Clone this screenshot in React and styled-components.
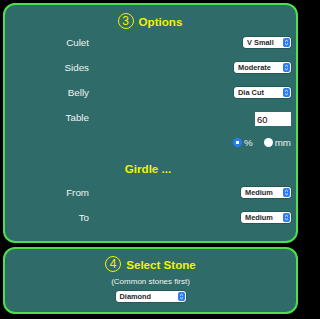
import React from "react";
import styled, { createGlobalStyle } from "styled-components";

const Global = createGlobalStyle`
  html, body { margin: 0; padding: 0; background: #000; }
  body { font-family: "Liberation Sans", Arial, sans-serif; }
`;

const Page = styled.div`
  width: 300px;
  height: 319px;
  box-sizing: border-box;
  padding: 3px 2px 0 3px;
  display: flex;
  flex-direction: column;
  gap: 4px;
  background: #000;
`;

const Panel = styled.section`
  box-sizing: border-box;
  height: ${(p) => p.$h}px;
  background: #2f6b68;
  border: 2px solid #4ee04b;
  border-radius: 12px;
  padding: ${(p) => p.$pad};
  display: flex;
  flex-direction: column;
`;

const Title = styled.h2`
  margin: 0;
  height: 18px;
  display: flex;
  align-items: center;
  justify-content: center;
  gap: 5px;
  color: #f4f200;
  font-size: 11.6px;
  font-weight: bold;
  padding-left: ${(p) => p.$shift || 0}px;
`;

const Circle = styled.span`
  box-sizing: border-box;
  width: 16px;
  height: 16px;
  border: 1.3px solid #f4f200;
  border-radius: 50%;
  display: inline-flex;
  align-items: center;
  justify-content: center;
  font-size: 12px;
  font-weight: normal;
  line-height: 1;
`;

const Row = styled.div`
  height: 25px;
  display: grid;
  grid-template-columns: 84px 1fr;
  align-items: center;
`;

const Label = styled.span`
  text-align: right;
  color: #f0f4f2;
  font-size: 9.8px;
`;

const Control = styled.div`
  justify-self: end;
  display: flex;
  align-items: center;
`;

const SubTitle = styled.div`
  height: 25px;
  display: flex;
  align-items: center;
  justify-content: center;
  color: #f4f200;
  font-size: 11.6px;
  font-weight: bold;
  padding-top: 2px;
  box-sizing: border-box;
`;

const SelectBox = styled.div`
  box-sizing: border-box;
  width: ${(p) => p.$w}px;
  height: 11px;
  background: #fff;
  border-radius: 3px;
  box-shadow: 0 0 0 0.5px rgba(0, 0, 0, 0.35);
  display: flex;
  align-items: center;
  justify-content: space-between;
  padding: 0 1px 0 4px;
  font-size: 7.4px;
  font-weight: bold;
  color: #2a2a2a;
`;

const Arrow = styled.span`
  width: 7px;
  height: 9px;
  border-radius: 2px;
  background: #2a7cf4;
  display: flex;
  align-items: center;
  justify-content: center;
`;

const TextInput = styled.input`
  box-sizing: border-box;
  width: 36px;
  height: 14px;
  margin: 3px 0 0 0;
  border: none;
  outline: none;
  background: #fff;
  padding: 0 0 0 2px;
  font-family: "Liberation Sans", Arial, sans-serif;
  font-size: 9.4px;
  color: #000;
`;

const RadioGroup = styled.div`
  justify-self: end;
  display: flex;
  align-items: center;
  gap: 11px;
  color: #f0f4f2;
  font-size: 9.8px;
`;

const RadioLabel = styled.label`
  display: flex;
  align-items: center;
  gap: 2px;
`;

const Radio = styled.input`
  appearance: none;
  margin: 0;
  width: 9px;
  height: 9px;
  border-radius: 50%;
  background: #fff;
  &:checked {
    background: radial-gradient(circle, #fff 0 1.4px, #2a7cf4 1.8px);
  }
`;

const Note = styled.div`
  text-align: center;
  color: #f0f4f2;
  font-size: 8px;
  height: 11px;
  line-height: 11px;
  margin-top: 3px;
`;

const Center = styled.div`
  display: flex;
  justify-content: center;
  margin-top: 4px;
`;

const Updown = () => (
  <svg width="5" height="7" viewBox="0 0 5 7">
    <path d="M1 2.6 L2.5 1.2 L4 2.6 M1 4.4 L2.5 5.8 L4 4.4" stroke="#fff" strokeWidth="0.9" fill="none" />
  </svg>
);

const Select = ({ w, children }) => (
  <SelectBox $w={w}>
    <span>{children}</span>
    <Arrow>
      <Updown />
    </Arrow>
  </SelectBox>
);

export default function App() {
  return (
    <>
      <Global />
      <Page>
        <Panel $h={240} $pad="7px 5px 0 0">
          <Title $shift={4}>
            <Circle>3</Circle>
            Options
          </Title>
          <Row>
            <Label>Culet</Label>
            <Control>
              <Select w={48}>V Small</Select>
            </Control>
          </Row>
          <Row>
            <Label>Sides</Label>
            <Control>
              <Select w={57}>Moderate</Select>
            </Control>
          </Row>
          <Row>
            <Label>Belly</Label>
            <Control>
              <Select w={57}>Dia Cut</Select>
            </Control>
          </Row>
          <Row>
            <Label>Table</Label>
            <Control>
              <TextInput defaultValue="60" />
            </Control>
          </Row>
          <Row>
            <span />
            <RadioGroup>
              <RadioLabel>
                <Radio type="radio" name="unit" defaultChecked />%
              </RadioLabel>
              <RadioLabel>
                <Radio type="radio" name="unit" />mm
              </RadioLabel>
            </RadioGroup>
          </Row>
          <SubTitle>Girdle ...</SubTitle>
          <Row>
            <Label>From</Label>
            <Control>
              <Select w={50}>Medium</Select>
            </Control>
          </Row>
          <Row>
            <Label>To</Label>
            <Control>
              <Select w={50}>Medium</Select>
            </Control>
          </Row>
        </Panel>
        <Panel $h={67} $pad="6px 0 0 0">
          <Title $shift={0}>
            <Circle>4</Circle>
            Select Stone
          </Title>
          <Note>(Common stones first)</Note>
          <Center>
            <Select w={70}>Diamond</Select>
          </Center>
        </Panel>
      </Page>
    </>
  );
}
